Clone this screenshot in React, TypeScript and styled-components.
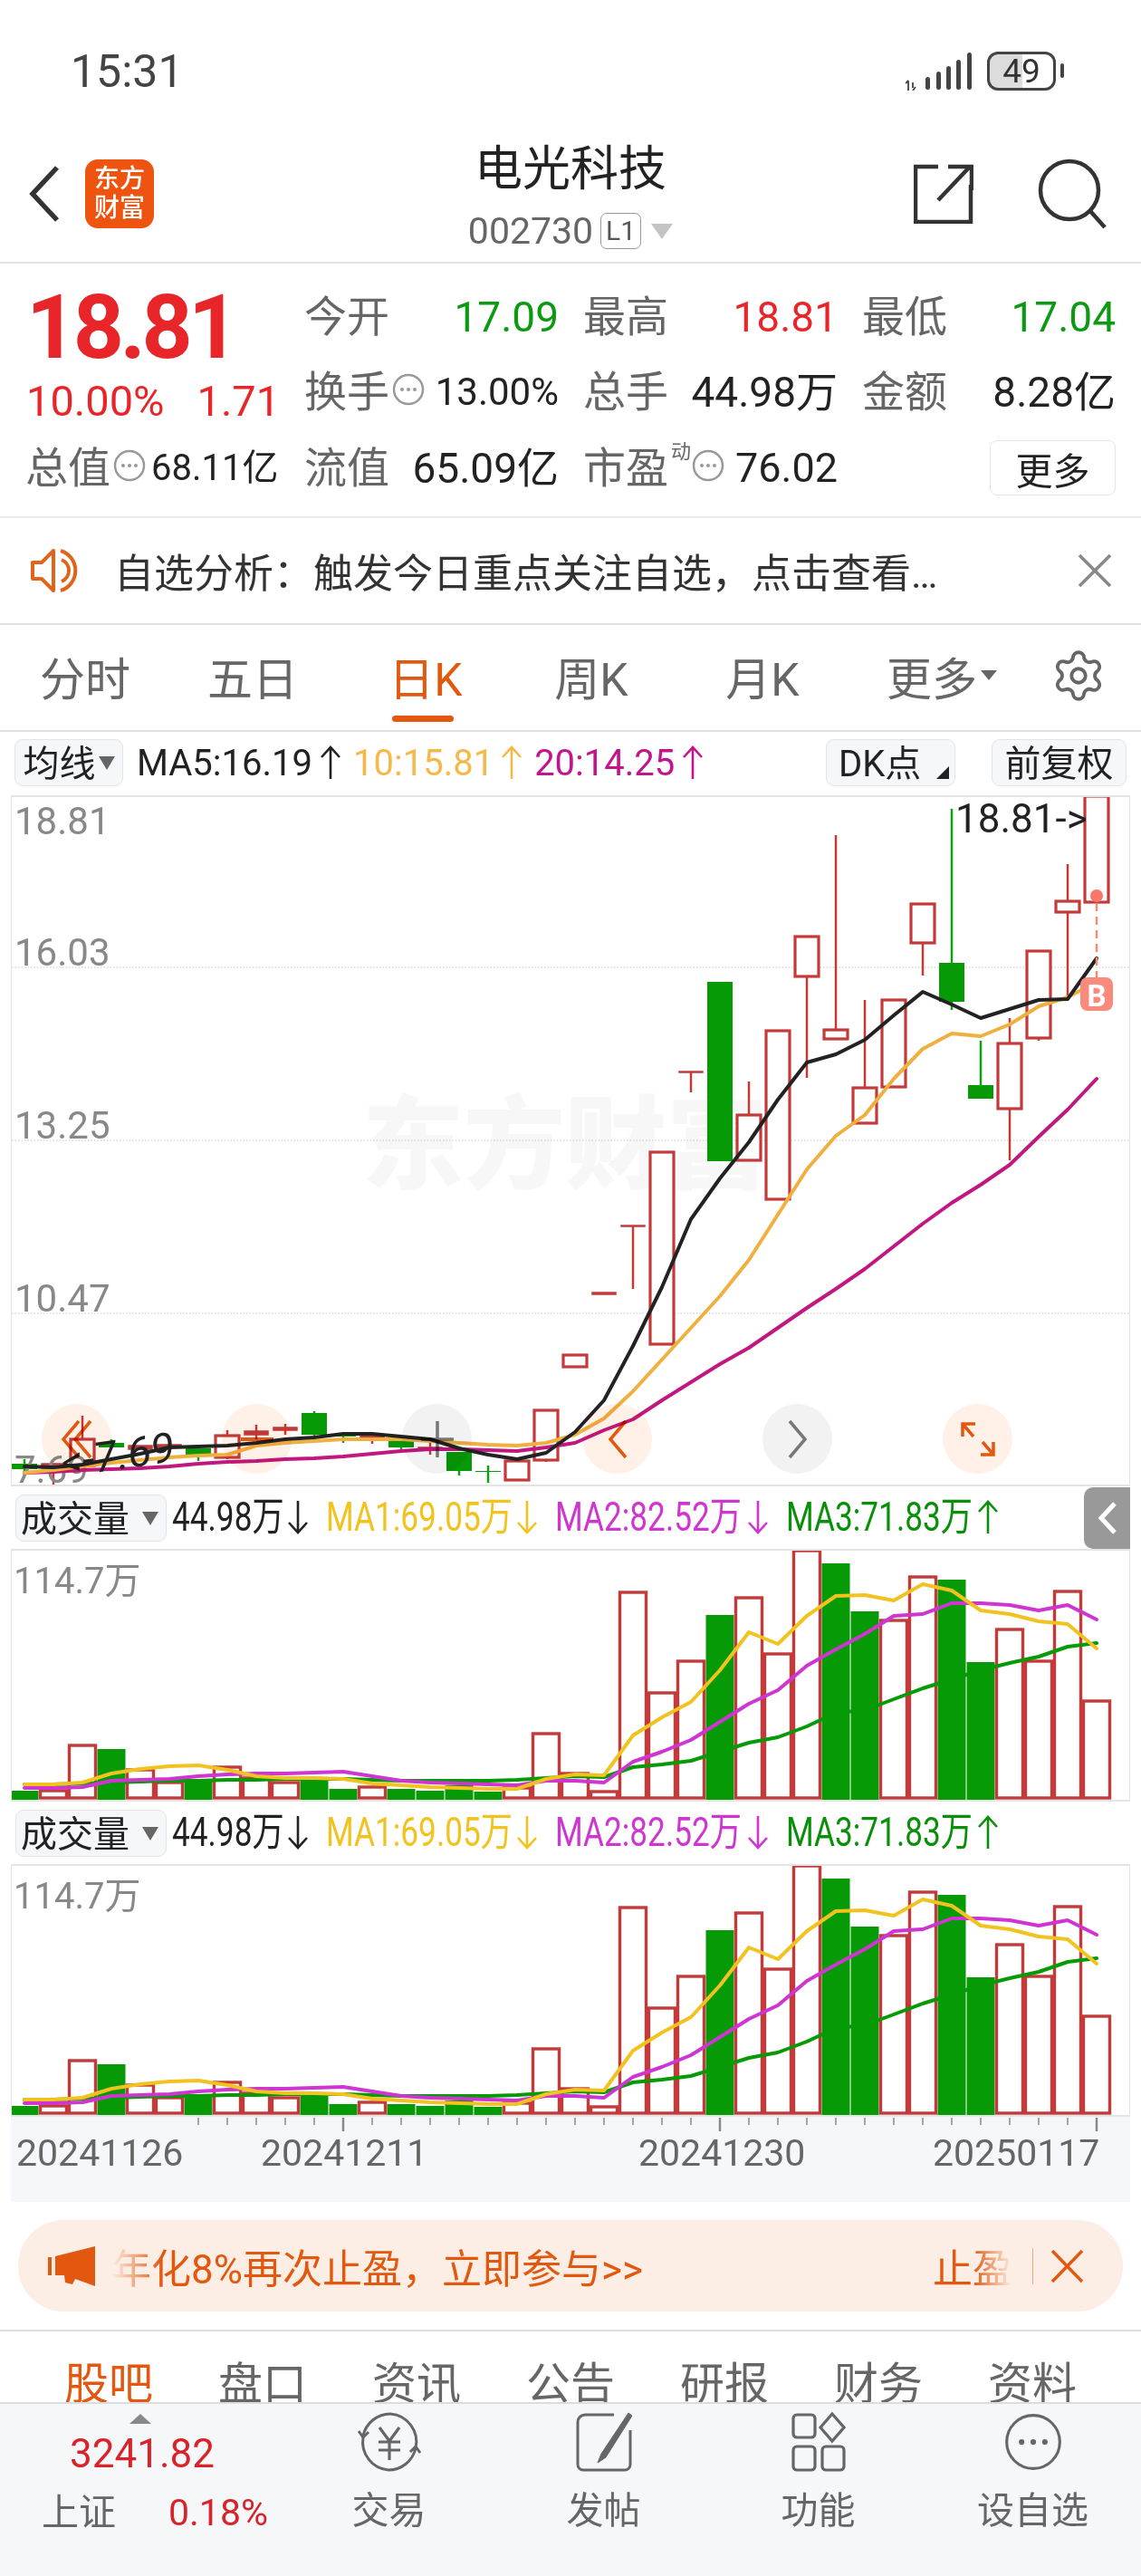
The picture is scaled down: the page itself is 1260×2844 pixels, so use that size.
import React, { FC } from "react";
import styled, { createGlobalStyle } from "styled-components";
import { Settings } from "lucide-react";

const orange = "#e2580f";
const red = "#e8262a";
const green = "#0c9a12";
const barRed = "#c23a3a";
const barGreen = "#069a06";

const GlobalStyle = createGlobalStyle`
  html, body { margin: 0; padding: 0; background: #fff; }
  * { box-sizing: border-box; }
`;

const Page = styled.div`
  position: relative;
  width: 1260px;
  height: 2844px;
  overflow: hidden;
  background: #fff;
  color: #222;
  font-family: Roboto, "Noto Sans CJK SC", sans-serif;
`;

/* status bar */
const StatusBar = styled.div`
  height: 155px;
  display: flex;
  align-items: center;
  justify-content: space-between;
  padding: 2px 94px 0 78px;
`;
const Clock = styled.span`
  font-size: 50px;
  color: #444;
`;
const StatusIcons = styled.div`
  display: flex;
  align-items: center;
  gap: 16px;
`;
const Battery = styled.div`
  position: relative;
  width: 76px;
  height: 43px;
  border: 3px solid #444;
  border-radius: 12px;
  background: linear-gradient(90deg, #dcdcdc 52%, #fff 52%);
  display: flex;
  align-items: center;
  justify-content: center;
  font-size: 37px;
  color: #333;
  &::after {
    content: "";
    position: absolute;
    right: -12px;
    top: 10px;
    width: 4px;
    height: 16px;
    border-radius: 2px;
    background: #444;
  }
`;

/* title bar */
const Header = styled.header`
  height: 136px;
  border-bottom: 2px solid #e4e4e4;
  display: grid;
  grid-template-columns: 1fr auto 1fr;
`;
const HeaderLeft = styled.div`
  display: flex;
  align-items: center;
  gap: 28px;
  padding: 0 0 16px 32px;
`;
const Logo = styled.div`
  width: 76px;
  height: 76px;
  border-radius: 14px;
  background: #ee5410;
  color: #fff;
  font-size: 28px;
  line-height: 32px;
  font-weight: 500;
  text-align: center;
  padding-top: 6px;
`;
const TitleBlock = styled.div`
  display: flex;
  flex-direction: column;
  align-items: center;
`;
const Title = styled.h1`
  margin: 4px 0 0;
  font-size: 53px;
  line-height: 56px;
  font-weight: 400;
  color: #222;
`;
const CodeRow = styled.div`
  display: flex;
  align-items: center;
  margin-top: 18px;
  color: #666;
  font-size: 41px;
  line-height: 44px;
`;
const LevelBadge = styled.span`
  width: 45px;
  height: 40px;
  margin-left: 8px;
  border: 1.5px solid #999;
  border-radius: 7px;
  font-size: 30px;
  line-height: 37px;
  text-align: center;
  color: #555;
`;
const CodeCaret = styled.span`
  width: 0;
  height: 0;
  margin-left: 11px;
  border-left: 12px solid transparent;
  border-right: 12px solid transparent;
  border-top: 17px solid #c4c4c4;
`;
const HeaderRight = styled.div`
  display: flex;
  align-items: center;
  justify-content: flex-end;
  gap: 71px;
  padding: 0 38px 16px 0;
`;

/* quote panel */
const QuotePanel = styled.section`
  height: 281px;
  border-bottom: 2px solid #ececec;
  padding-top: 17px;
  display: grid;
  grid-template-columns: 337px 308px 308px 307px;
  grid-auto-rows: 83.5px;
`;
const PriceCell = styled.div`
  padding-left: 29px;
  font-size: 98px;
  line-height: 94px;
  letter-spacing: -4.5px;
  font-weight: 700;
  color: ${red};
  padding-top: 7px;
`;
const ChangeCell = styled.div`
  display: flex;
  gap: 36px;
  padding: 24px 0 0 29px;
  font-size: 47px;
  line-height: 54px;
  color: ${red};
`;
const Stat = styled.div`
  display: flex;
  align-items: center;
  justify-content: space-between;
  padding-right: 28px;
  white-space: nowrap;
`;
const FirstStat = styled(Stat)`
  justify-content: flex-start;
  padding-left: 29px;
`;
const StatName = styled.span`
  display: inline-flex;
  align-items: flex-start;
  font-size: 47px;
  line-height: 52px;
  color: #666;
  margin-left: -1px;
`;
const InfoMark = styled.span`
  display: inline-flex;
  margin: 5px 0 0 3px;
`;
const Superscript = styled.sup`
  font-size: 22px;
  line-height: 24px;
  margin: -4px -2px 0 3px;
  vertical-align: top;
  color: #666;
`;
const StatValue = styled.span<{ $color?: string; $size?: number; $gap?: number }>`
  font-size: ${(p) => p.$size ?? 46}px;
  line-height: 52px;
  margin-left: ${(p) => p.$gap ?? 0}px;
  color: ${(p) => p.$color ?? "#222"};
`;
const MoreButton = styled.button`
  justify-self: end;
  align-self: center;
  width: 139px;
  height: 61px;
  margin-right: 28px;
  padding: 0;
  background: #fff;
  border: 1.5px solid #e6e6e6;
  border-radius: 8px;
  color: #222;
  font: inherit;
  font-size: 41px;
`;

/* notice strip */
const Notice = styled.div`
  height: 118px;
  border-bottom: 2px solid #dedede;
  display: flex;
  align-items: center;
  padding: 0 32px 0 34px;
  gap: 36px;
  font-size: 44px;
  color: #333;
`;
const NoticeText = styled.span`
  flex: 1;
  white-space: nowrap;
`;

/* period tabs */
const PeriodTabs = styled.nav`
  height: 118px;
  border-bottom: 2px solid #dedede;
  display: grid;
  grid-template-columns: 188px 182px 200px 166px 212px 184px 118px;
  align-items: stretch;
`;
const PeriodTab = styled.div<{ $active?: boolean }>`
  position: relative;
  display: flex;
  align-items: center;
  justify-content: center;
  font-size: 50px;
  color: ${(p) => (p.$active ? orange : "#666")};
  padding-bottom: 5px;
  &::after {
    content: "";
    display: ${(p) => (p.$active ? "block" : "none")};
    position: absolute;
    left: 63px;
    bottom: 9px;
    width: 68px;
    height: 7px;
    border-radius: 4px;
    background: ${orange};
  }
`;
const TabCaret = styled.span`
  width: 0;
  height: 0;
  margin-left: 4px;
  border-left: 9px solid transparent;
  border-right: 9px solid transparent;
  border-top: 11px solid #666;
`;

/* indicator legends */
const IndicatorRow = styled.div`
  height: 70px;
  padding: 8px 16px 0;
  display: flex;
  align-items: flex-start;
`;
const ChipButton = styled.div<{ $width: number; $inset?: number }>`
  width: ${(p) => p.$width}px;
  height: 52px;
  flex: none;
  display: flex;
  align-items: center;
  justify-content: ${(p) => (p.$inset ? "flex-start" : "center")};
  padding: 0 0 4px ${(p) => p.$inset ?? 0}px;
  background: #f6f7f9;
  border: 1.5px solid #e2e4e8;
  border-radius: 9px;
  font-size: 40px;
  color: #222;
  position: relative;
`;
const ChipCaret = styled.span<{ $gap?: number }>`
  width: 0;
  height: 0;
  margin: 4px 0 0 ${(p) => p.$gap ?? 3}px;
  border-left: 9px solid transparent;
  border-right: 9px solid transparent;
  border-top: 15px solid #666;
`;
const CornerMark = styled.span`
  position: absolute;
  right: 6px;
  bottom: 7px;
  width: 0;
  height: 0;
  border-left: 14px solid transparent;
  border-bottom: 14px solid #222;
`;
const MaGroup = styled.div`
  display: flex;
  align-items: center;
  height: 52px;
  flex: 1;
  margin-left: 15px;
  gap: 13px;
  font-size: 40px;
  white-space: nowrap;
`;
const MaItem = styled.span<{ $color: string }>`
  display: inline-flex;
  align-items: center;
  gap: 8px;
  color: ${(p) => p.$color};
`;
const RightChips = styled.div`
  display: flex;
  gap: 40px;
`;
const ArrowSvg = styled.svg`
  width: 24px;
  height: 38px;
  flex: none;
`;

/* chart frames */
const ChartFrame = styled.div<{ $height: number }>`
  position: relative;
  margin: 0 12px;
  height: ${(p) => p.$height}px;
  border: solid #e4e4e4;
  border-width: 2px 1px;
  svg {
    display: block;
  }
`;
const ChartSvg = styled.svg`
  font-family: Roboto, "Noto Sans CJK SC", sans-serif;
`;
const OverlayButtons = styled.div`
  position: absolute;
  left: 33px;
  top: 670px;
  display: flex;
  gap: 122px;
`;
const RoundButton = styled.div<{ $tone: "warm" | "grey" }>`
  width: 77px;
  height: 77px;
  border-radius: 50%;
  display: flex;
  align-items: center;
  justify-content: center;
  mix-blend-mode: multiply;
  background: ${(p) => (p.$tone === "warm" ? "#fff0e8" : "#f2f2f2")};
  color: ${(p) => (p.$tone === "warm" ? orange : "#777")};
`;

/* volume panels */
const VolumeLegend = styled.div`
  position: relative;
  height: 69px;
  padding: 9px 0 0 17px;
  display: flex;
  align-items: flex-start;
`;
const VolItems = styled.div`
  height: 50px;
  margin-left: 6px;
  display: flex;
  align-items: center;
  gap: 19px;
  font-size: 44px;
  line-height: 50px;
`;
const VolItem = styled.span<{ $color: string }>`
  display: inline-flex;
  align-items: center;
  gap: 6px;
  color: ${(p) => p.$color};
`;
const Squeezed = styled.span<{ $w: number }>`
  display: inline-block;
  width: ${(p) => p.$w / 0.8}px;
  margin-right: ${(p) => p.$w - p.$w / 0.8}px;
  transform: scaleX(0.8);
  transform-origin: 0 50%;
  white-space: nowrap;
`;
const SideHandle = styled.div`
  position: absolute;
  right: 12px;
  top: 1px;
  width: 51px;
  height: 68px;
  background: #999;
  border-radius: 10px 0 0 10px;
  display: flex;
  align-items: center;
  justify-content: center;
`;

/* date axis */
const DateAxis = styled.div`
  height: 94px;
  margin: 0 12px;
  background: #f6f7fa;
`;

/* promo banner */
const Banner = styled.div`
  height: 101px;
  margin: 20px 20px 0;
  border-radius: 50px;
  background: #fdeee5;
  display: flex;
  align-items: center;
  padding: 0 43px 0 33px;
  color: ${orange};
  font-size: 44px;
`;
const BannerText = styled.span`
  flex: 1;
  margin-left: 18px;
  white-space: nowrap;
  mask-image: linear-gradient(90deg, transparent 0, #000 56px);
`;
const BannerTag = styled.span`
  white-space: nowrap;
  mask-image: linear-gradient(90deg, #000 50%, transparent 100%);
`;
const BannerRule = styled.span`
  width: 1px;
  height: 40px;
  margin: 0 19px 0 22px;
  background: #e6a98a;
`;

/* content tabs, cut off by the bottom bar */
const ContentTabs = styled.div`
  height: 80px;
  margin-top: 20px;
  border-top: 2px solid #dedede;
  padding: 34px 35px 0;
  overflow: hidden;
  display: grid;
  grid-template-columns: repeat(7, 1fr);
  text-align: center;
  font-size: 49px;
  line-height: 50px;
  color: #666;
`;
const ContentTab = styled.span<{ $active?: boolean }>`
  color: ${(p) => (p.$active ? orange : "#666")};
`;

/* bottom bar */
const BottomBar = styled.footer`
  height: 193px;
  border-top: 2px solid #dcdcdc;
  background: #f6f7f9;
  display: grid;
  grid-template-columns: 311px repeat(4, 237px);
`;
const IndexBlock = styled.div`
  position: relative;
  padding: 33px 0 0 46px;
  &::before {
    content: "";
    position: absolute;
    left: 143px;
    top: 11px;
    width: 0;
    height: 0;
    border-left: 12px solid transparent;
    border-right: 12px solid transparent;
    border-bottom: 11px solid #888;
  }
`;
const IndexValue = styled.div`
  padding-left: 31px;
  font-size: 44px;
  line-height: 44px;
  color: #d9232a;
`;
const IndexRow = styled.div`
  display: flex;
  align-items: center;
  margin-top: 20px;
  gap: 58px;
  font-size: 41px;
  line-height: 46px;
  color: #666;
`;
const IndexPct = styled.span`
  color: #d9232a;
`;
const NavItem = styled.div`
  display: flex;
  flex-direction: column;
  align-items: center;
  padding-top: 9px;
  font-size: 41px;
  line-height: 46px;
  color: #666;
  svg {
    display: block;
    margin-bottom: 20px;
  }
`;

/* ---- chart data ---- */
type Candle = { top: number; bottom: number; high?: number; low?: number; up: boolean };

const candles: Candle[] = [
  { top: 1615, bottom: 1621, high: 1610, low: 1627, up: false },
  { top: 1615, bottom: 1620, low: 1638, up: true },
  { top: 1588, bottom: 1617, high: 1562, up: true },
  { top: 1592, bottom: 1597, high: 1588, low: 1598, up: false },
  { top: 1595, bottom: 1599, up: true },
  { top: 1594, bottom: 1597, up: true },
  { top: 1598, bottom: 1606, low: 1612, up: false },
  { top: 1584, bottom: 1608, high: 1578, low: 1610, up: true },
  { top: 1579, bottom: 1583, high: 1572, low: 1588, up: true },
  { top: 1575, bottom: 1578, high: 1571, low: 1583, up: true },
  { top: 1559, bottom: 1583, high: 1557, low: 1585, up: false },
  { top: 1582, bottom: 1585, low: 1592, up: false },
  { top: 1583, bottom: 1586, low: 1593, up: true },
  { top: 1589, bottom: 1597, low: 1599, up: false },
  { top: 1597, bottom: 1599, high: 1588, low: 1605, up: true },
  { top: 1602, bottom: 1623, low: 1628, up: false },
  { top: 1623, bottom: 1624, high: 1617, low: 1636, up: false },
  { top: 1612, bottom: 1633, up: true },
  { top: 1556, bottom: 1611, low: 1613, up: true },
  { top: 1495, bottom: 1508, up: true },
  { top: 1426, bottom: 1428, up: true },
  { top: 1352, bottom: 1353, low: 1422, up: true },
  { top: 1271, bottom: 1483, up: true },
  { top: 1182, bottom: 1183, low: 1205, up: true },
  { top: 1083, bottom: 1281, up: false },
  { top: 1230, bottom: 1280, high: 1193, up: true },
  { top: 1137, bottom: 1323, up: true },
  { top: 1033, bottom: 1077, low: 1189, up: true },
  { top: 1136, bottom: 1146, high: 921, up: true },
  { top: 1200, bottom: 1239, high: 1103, up: true },
  { top: 1103, bottom: 1199, up: true },
  { top: 997, bottom: 1040, low: 1076, up: true },
  { top: 1062, bottom: 1105, high: 892, low: 1114, up: false },
  { top: 1197, bottom: 1212, high: 1148, up: false },
  { top: 1151, bottom: 1223, high: 1123, low: 1280, up: true },
  { top: 1049, bottom: 1145, low: 1148, up: true },
  { top: 994, bottom: 1006, high: 953, low: 1103, up: true },
  { top: 878, bottom: 995, up: true },
];

const ma5 = [
  1618, 1619, 1616, 1610, 1604, 1597, 1596, 1595, 1592, 1588, 1586, 1582, 1582, 1585, 1588, 1598,
  1605, 1610, 1603, 1580, 1545, 1485, 1420, 1345, 1300, 1260, 1213, 1172, 1163, 1147, 1120, 1094,
  1108, 1123, 1113, 1103, 1102, 1057,
];
const ma10 = [
  1625, 1622, 1618, 1614, 1611, 1608, 1606, 1605, 1595, 1592, 1590, 1588, 1588, 1588, 1590, 1592,
  1594, 1595, 1592, 1583, 1565, 1535, 1500, 1465, 1430, 1390, 1340, 1290, 1253, 1230, 1190, 1157,
  1140, 1143, 1130, 1110, 1100, 1083,
];
const ma20 = [
  1625, 1624, 1622, 1621, 1620, 1618, 1615, 1613, 1612, 1610, 1609, 1607, 1604, 1601, 1599, 1599,
  1600, 1601, 1597, 1592, 1578, 1566, 1545, 1525, 1505, 1487, 1465, 1443, 1422, 1400, 1375, 1350,
  1327, 1307, 1285, 1254, 1224, 1190,
];

const volumes: [number, boolean][] = [
  [1976, false], [1976, true], [1926, true], [1930, false], [1953, true], [1967, true],
  [1963, false], [1950, true], [1962, true], [1967, true], [1963, false], [1974, false],
  [1972, true], [1974, false], [1976, false], [1970, false], [1977, false], [1973, true],
  [1913, true], [1957, true], [1977, true], [1757, true], [1868, true], [1833, true],
  [1782, false], [1763, true], [1825, true], [1711, true], [1725, false], [1778, false],
  [1788, true], [1740, true], [1743, false], [1834, false], [1798, true], [1833, true],
  [1756, true], [1877, true],
];
const volMa1 = [
  1969, 1969, 1967, 1957, 1952, 1949, 1948, 1953, 1960, 1962, 1962, 1963, 1968, 1970, 1972, 1973,
  1974, 1974, 1963, 1958, 1959, 1915, 1895, 1878, 1843, 1801, 1814, 1783, 1761, 1760, 1766, 1748,
  1755, 1777, 1781, 1789, 1792, 1819,
];
const volMa2 = [
  1973, 1973, 1972, 1965, 1964, 1963, 1960, 1958, 1957, 1957, 1956, 1955, 1960, 1965, 1967, 1968,
  1969, 1970, 1965, 1965, 1967, 1944, 1933, 1920, 1900, 1880, 1865, 1838, 1820, 1803, 1783, 1781,
  1769, 1769, 1771, 1777, 1771, 1787,
];
const volMa3 = [
  1969, 1969, 1968, 1967, 1966, 1965, 1965, 1964, 1964, 1963, 1963, 1963, 1964, 1965, 1965, 1965,
  1965, 1964, 1962, 1960, 1961, 1950, 1947, 1943, 1933, 1923, 1917, 1905, 1890, 1887, 1875, 1863,
  1853, 1843, 1835, 1828, 1817, 1813,
];

const slotX = (i: number) => 27 + 32 * i;
const toPoints = (series: number[]) => series.map((y, i) => `${slotX(i)},${y}`).join(" ");

/* ---- small drawings ---- */
const Arrow: FC<{ dir: "up" | "down" }> = ({ dir }) => (
  <ArrowSvg viewBox="0 0 24 38" fill="none" stroke="currentColor" strokeWidth="2.6">
    {dir === "up" ? (
      <path d="M12 37V2M2 13 12 2l10 11" />
    ) : (
      <path d="M12 1v35M2 25l10 11 10-11" />
    )}
  </ArrowSvg>
);

const DotsCircle: FC<{ size: number; color?: string; stroke?: number; dot?: number }> = ({
  size,
  color = "#999",
  stroke = 2.5,
  dot = 2,
}) => (
  <svg width={size} height={size} viewBox="0 0 36 36" style={{ flex: "none" }}>
    <circle cx="18" cy="18" r="16" fill="none" stroke={color} strokeWidth={stroke} />
    <circle cx="11" cy="18" r={dot} fill={color} />
    <circle cx="18" cy="18" r={dot} fill={color} />
    <circle cx="25" cy="18" r={dot} fill={color} />
  </svg>
);

const InfoDots = () => (
  <InfoMark>
    <DotsCircle size={36} />
  </InfoMark>
);

const SignalBars = () => (
  <svg width="74" height="42" viewBox="0 0 74 42" fill="#444">
    <path d="M3 31v11M0 34l3-3M8 33v6M8 42l3-4" stroke="#444" strokeWidth="1.8" fill="none" />
    <rect x="22" y="27" width="5" height="14" rx="2.5" />
    <rect x="34" y="21" width="5" height="20" rx="2.5" />
    <rect x="45" y="15" width="5" height="26" rx="2.5" />
    <rect x="56" y="8" width="5" height="33" rx="2.5" />
    <rect x="68" y="0" width="5" height="41" rx="2.5" />
  </svg>
);

const Candles = () => (
  <>
    {candles.map((c, i) => {
      const x = slotX(i);
      const color = c.up ? barRed : barGreen;
      const flat = c.bottom - c.top <= 6;
      return (
        <g key={i}>
          <line
            x1={x}
            x2={x}
            y1={c.high ?? c.top}
            y2={c.low ?? c.bottom}
            stroke={c.up ? color : "#139f13"}
            strokeWidth="2.5"
          />
          {c.up ? (
            <rect
              x={x - 13}
              y={c.top}
              width="26"
              height={c.bottom - c.top}
              fill={flat ? barRed : "#fff"}
              stroke={barRed}
              strokeWidth={flat ? 1.5 : 3.2}
            />
          ) : (
            <rect x={x - 14} y={c.top} width="28" height={c.bottom - c.top} fill={color} />
          )}
        </g>
      );
    })}
  </>
);

const PriceChart = () => (
  <ChartSvg width="1234" height="759" viewBox="13 879 1234 759">
    <text x="400" y="1303" fontSize="112" fontWeight="900" fill="#f7f7f7">
      东方财富
    </text>
    {[1067, 1258, 1449].map((y) => (
      <line key={y} x1="13" x2="1247" y1={y} y2={y} stroke="#d8d8d8" strokeWidth="1.5" strokeDasharray="1.5 2" />
    ))}
    <Candles />
    <g fontSize="42" fill="#888">
      <text x="16" y="920">18.81</text>
      <text x="16" y="1065">16.03</text>
      <text x="16" y="1256">13.25</text>
      <text x="16" y="1447">10.47</text>
      <text x="16" y="1636">7.69</text>
    </g>
    <g fill="none" strokeLinejoin="round" strokeLinecap="round" strokeWidth="4">
      <polyline points={toPoints(ma20)} stroke="#c0187f" />
      <polyline points={toPoints(ma10)} stroke="#f0b040" />
      <polyline points={toPoints(ma5)} stroke="#222" />
    </g>
    <text x="1055" y="918" fontSize="44" fill="#222">18.81-&gt;</text>
    <text fontSize="46" fill="#222" transform="translate(68 1630) rotate(-8) skewX(-8)">
      &lt;-7.69
    </text>
    <circle cx="1211" cy="988" r="7" fill="#f8776a" />
    <line x1="1211" x2="1211" y1="996" y2="1080" stroke="#f8877a" strokeWidth="2.5" strokeDasharray="9 6" />
    <rect x="1193" y="1078" width="36" height="37" rx="8" fill="#f98a7c" />
    <text x="1211" y="1110" fontSize="33" fontWeight="700" fill="#fff" textAnchor="middle">B</text>
  </ChartSvg>
);

const VolumeChart = () => (
  <ChartSvg width="1234" height="275" viewBox="13 1711 1234 275">
    {volumes.map(([top, up], i) => {
      const x = slotX(i);
      return up ? (
        <rect key={i} x={x - 14.5} y={top} width="29" height={1984 - top} fill="#fff" stroke={barRed} strokeWidth="3.4" />
      ) : (
        <rect key={i} x={x - 15.5} y={top} width="31" height={1986 - top} fill={barGreen} />
      );
    })}
    <text x="15" y="1758" fontSize="40" fill="#888">114.7万</text>
    <g fill="none" strokeLinejoin="round" strokeLinecap="round" strokeWidth="4">
      <polyline points={toPoints(volMa3)} stroke={barGreen} />
      <polyline points={toPoints(volMa2)} stroke="#cf35d0" />
      <polyline points={toPoints(volMa1)} stroke="#f2c21f" />
    </g>
  </ChartSvg>
);

const VolumePanel: FC<{ showHandle?: boolean }> = ({ showHandle }) => (
  <>
    <VolumeLegend>
      <ChipButton $width={167} $inset={5}>
        成交量
        <ChipCaret $gap={14} />
      </ChipButton>
      <VolItems>
        <VolItem $color="#222">
          <Squeezed $w={121}>44.98万</Squeezed>
          <Arrow dir="down" />
        </VolItem>
        <VolItem $color="#f2c21f">
          <Squeezed $w={204}>MA1:69.05万</Squeezed>
          <Arrow dir="down" />
        </VolItem>
        <VolItem $color="#cf35d0">
          <Squeezed $w={206}>MA2:82.52万</Squeezed>
          <Arrow dir="down" />
        </VolItem>
        <VolItem $color="#0a8f0a">
          <Squeezed $w={205}>MA3:71.83万</Squeezed>
          <Arrow dir="up" />
        </VolItem>
      </VolItems>
      {showHandle && (
        <SideHandle>
          <svg width="22" height="38" viewBox="0 0 22 38" fill="none" stroke="#fff" strokeWidth="5">
            <path d="M19 3 4 19l15 16" />
          </svg>
        </SideHandle>
      )}
    </VolumeLegend>
    <ChartFrame $height={279}>
      <VolumeChart />
    </ChartFrame>
  </>
);

const axisTicks = Array.from({ length: 32 }, (_, k) => k + 6);
const axisDates = [
  { x: 18, label: "20241126" },
  { x: 288, label: "20241211" },
  { x: 705, label: "20241230" },
  { x: 1030, label: "20250117" },
];

const TimeAxis = () => (
  <DateAxis>
    <ChartSvg width="1236" height="94" viewBox="12 2336 1236 94">
      {axisTicks.map((i) => {
        const long = i === 11 || i === 24 || i === 37;
        return (
          <line key={i} x1={slotX(i)} x2={slotX(i)} y1="2337" y2={long ? 2352 : 2345} stroke="#888" strokeWidth={long ? 2.5 : 1.5} />
        );
      })}
      {axisDates.map((d) => (
        <text key={d.label} x={d.x} y="2390" fontSize="41" fill="#666">
          {d.label}
        </text>
      ))}
    </ChartSvg>
  </DateAxis>
);

const App: FC = () => (
  <Page>
    <GlobalStyle />
    <StatusBar>
      <Clock>15:31</Clock>
      <StatusIcons>
        <SignalBars />
        <Battery>49</Battery>
      </StatusIcons>
    </StatusBar>

    <Header>
      <HeaderLeft>
        <svg width="34" height="62" viewBox="0 0 34 62" fill="none" stroke="#333" strokeWidth="5.5">
          <path d="M31 2 4 31l27 29" />
        </svg>
        <Logo>
          东方
          <br />
          财富
        </Logo>
      </HeaderLeft>
      <TitleBlock>
        <Title>电光科技</Title>
        <CodeRow>
          002730
          <LevelBadge>L1</LevelBadge>
          <CodeCaret />
        </CodeRow>
      </TitleBlock>
      <HeaderRight>
        <svg width="66" height="66" viewBox="0 0 66 66" fill="none" stroke="#333" strokeWidth="4.5">
          <path d="M27 3H2v61h61V23" />
          <path d="M27 40 62 3M38 3h26v26" />
        </svg>
        <svg width="76" height="78" viewBox="0 0 76 78" fill="none" stroke="#333" strokeWidth="4.5">
          <circle cx="35" cy="35" r="32" />
          <path d="m58 58 16 18" />
        </svg>
      </HeaderRight>
    </Header>

    <QuotePanel>
      <PriceCell>18.81</PriceCell>
      <Stat>
        <StatName>今开</StatName>
        <StatValue $color={green}>17.09</StatValue>
      </Stat>
      <Stat>
        <StatName>最高</StatName>
        <StatValue $color={red}>18.81</StatValue>
      </Stat>
      <Stat>
        <StatName>最低</StatName>
        <StatValue $color={green}>17.04</StatValue>
      </Stat>

      <ChangeCell>
        <span>10.00%</span>
        <span>1.71</span>
      </ChangeCell>
      <Stat>
        <StatName>
          换手
          <InfoDots />
        </StatName>
        <StatValue $size={42}>13.00%</StatValue>
      </Stat>
      <Stat>
        <StatName>总手</StatName>
        <StatValue>44.98万</StatValue>
      </Stat>
      <Stat>
        <StatName>金额</StatName>
        <StatValue>8.28亿</StatValue>
      </Stat>

      <FirstStat>
        <StatName>
          总值
          <InfoDots />
        </StatName>
        <StatValue $size={40} $gap={6}>68.11亿</StatValue>
      </FirstStat>
      <Stat>
        <StatName>流值</StatName>
        <StatValue>65.09亿</StatValue>
      </Stat>
      <Stat>
        <StatName>
          市盈
          <Superscript>动</Superscript>
          <InfoDots />
        </StatName>
        <StatValue $size={45}>76.02</StatValue>
      </Stat>
      <MoreButton>更多</MoreButton>
    </QuotePanel>

    <Notice>
      <svg width="56" height="48" viewBox="0 0 56 48" fill="none" stroke="#e0641a" strokeWidth="4" strokeLinejoin="round">
        <path d="M25 2v44L12 33H2V15h10z" />
        <path d="M34 12a13 13 0 0 1 0 24" />
        <path d="M33 2a23 23 0 0 1 0 44" />
      </svg>
      <NoticeText>自选分析：触发今日重点关注自选，点击查看…</NoticeText>
      <svg width="38" height="38" viewBox="0 0 38 38" stroke="#888" strokeWidth="3.5">
        <path d="m2 2 34 34M36 2 2 36" />
      </svg>
    </Notice>

    <PeriodTabs>
      <PeriodTab>分时</PeriodTab>
      <PeriodTab>五日</PeriodTab>
      <PeriodTab $active>日K</PeriodTab>
      <PeriodTab>周K</PeriodTab>
      <PeriodTab>月K</PeriodTab>
      <PeriodTab>
        更多
        <TabCaret />
      </PeriodTab>
      <PeriodTab>
        <Settings size={62} strokeWidth={1.5} color="#666" />
      </PeriodTab>
    </PeriodTabs>

    <IndicatorRow>
      <ChipButton $width={120}>
        均线
        <ChipCaret />
      </ChipButton>
      <MaGroup>
        <MaItem $color="#222">
          MA5:16.19
          <Arrow dir="up" />
        </MaItem>
        <MaItem $color="#f5b94a">
          10:15.81
          <Arrow dir="up" />
        </MaItem>
        <MaItem $color="#c4148c">
          20:14.25
          <Arrow dir="up" />
        </MaItem>
      </MaGroup>
      <RightChips>
        <ChipButton $width={143} $inset={13}>
          DK点
          <CornerMark />
        </ChipButton>
        <ChipButton $width={149}>前复权</ChipButton>
      </RightChips>
    </IndicatorRow>

    <ChartFrame $height={763}>
      <PriceChart />
      <OverlayButtons>
        <RoundButton $tone="warm">
          <svg width="36" height="44" viewBox="0 0 36 44" fill="none" stroke="currentColor" strokeWidth="3.5">
            <path d="M20 2 3 22l17 20M33 2 16 22l17 20" />
          </svg>
        </RoundButton>
        <RoundButton $tone="warm">
          <svg width="36" height="6" viewBox="0 0 36 6" stroke="currentColor" strokeWidth="4">
            <path d="M0 3h36" />
          </svg>
        </RoundButton>
        <RoundButton $tone="grey">
          <svg width="36" height="44" viewBox="0 0 36 44" stroke="currentColor" strokeWidth="3.5">
            <path d="M18 2v40M0 22h36" />
          </svg>
        </RoundButton>
        <RoundButton $tone="warm">
          <svg width="22" height="44" viewBox="0 0 22 44" fill="none" stroke="currentColor" strokeWidth="3.5">
            <path d="M20 2 3 22l17 20" />
          </svg>
        </RoundButton>
        <RoundButton $tone="grey">
          <svg width="22" height="44" viewBox="0 0 22 44" fill="none" stroke="currentColor" strokeWidth="3.5">
            <path d="m2 2 17 20L2 42" />
          </svg>
        </RoundButton>
        <RoundButton $tone="warm">
          <svg width="40" height="40" viewBox="0 0 40 40" fill="none" stroke="currentColor" strokeWidth="3.5">
            <path d="M3 17V3h14M3 3l12 14M37 23v14H23M37 37 25 23" />
          </svg>
        </RoundButton>
      </OverlayButtons>
    </ChartFrame>

    <VolumePanel showHandle />
    <VolumePanel />
    <TimeAxis />

    <Banner>
      <svg width="52" height="44" viewBox="0 0 52 44" fill={orange}>
        <rect x="0" y="12" width="4" height="20" />
        <path d="M8 11 52 0v44L30 36l-3 6-8-2-1-8H8z" />
      </svg>
      <BannerText>年化8%再次止盈，立即参与&gt;&gt;</BannerText>
      <BannerTag>止盈</BannerTag>
      <BannerRule />
      <svg width="37" height="36" viewBox="0 0 37 36" stroke={orange} strokeWidth="3.5">
        <path d="m2 1 33 34M35 1 2 35" />
      </svg>
    </Banner>

    <ContentTabs>
      <ContentTab $active>股吧</ContentTab>
      <ContentTab>盘口</ContentTab>
      <ContentTab>资讯</ContentTab>
      <ContentTab>公告</ContentTab>
      <ContentTab>研报</ContentTab>
      <ContentTab>财务</ContentTab>
      <ContentTab>资料</ContentTab>
    </ContentTabs>

    <BottomBar>
      <IndexBlock>
        <IndexValue>3241.82</IndexValue>
        <IndexRow>
          <span>上证</span>
          <IndexPct>0.18%</IndexPct>
        </IndexRow>
      </IndexBlock>
      <NavItem>
        <svg width="74" height="66" viewBox="0 0 74 66" fill="none" stroke="#666" strokeWidth="3">
          <path d="M38 2a31 31 0 0 0-30 24" />
          <path d="M3 21l5 7 6-6" />
          <path d="M36 64a31 31 0 0 0 30-24M71 45l-5-7-6 6M8 28a31 31 0 0 0 28 36M38 2a31 31 0 0 1 28 38" strokeWidth="3" />
          <path d="M26 17l11 15 11-15M25 33h24M25 42h24M37 32v21" strokeWidth="3.2" />
        </svg>
        交易
      </NavItem>
      <NavItem>
        <svg width="62" height="66" viewBox="0 0 62 66" fill="none" stroke="#666" strokeWidth="3">
          <path d="M42 3H10a8 8 0 0 0-8 8v47a6 6 0 0 0 6 6h46a6 6 0 0 0 6-6V20" />
          <path d="M58 1 28 46l-4 10 9-6L62 4z" fill="#666" strokeWidth="1" />
        </svg>
        发帖
      </NavItem>
      <NavItem>
        <svg width="60" height="66" viewBox="0 0 60 66" fill="none" stroke="#666" strokeWidth="3.2">
          <rect x="2" y="3" width="24" height="25" rx="4" />
          <path d="m45 2 13 15-13 15-13-15z" />
          <rect x="2" y="38" width="24" height="26" rx="4" />
          <rect x="34" y="38" width="24" height="26" rx="4" />
        </svg>
        功能
      </NavItem>
      <NavItem>
        <DotsCircle size={66} color="#666" stroke={1.7} dot={1.7} />
        设自选
      </NavItem>
    </BottomBar>
  </Page>
);

export default App;
